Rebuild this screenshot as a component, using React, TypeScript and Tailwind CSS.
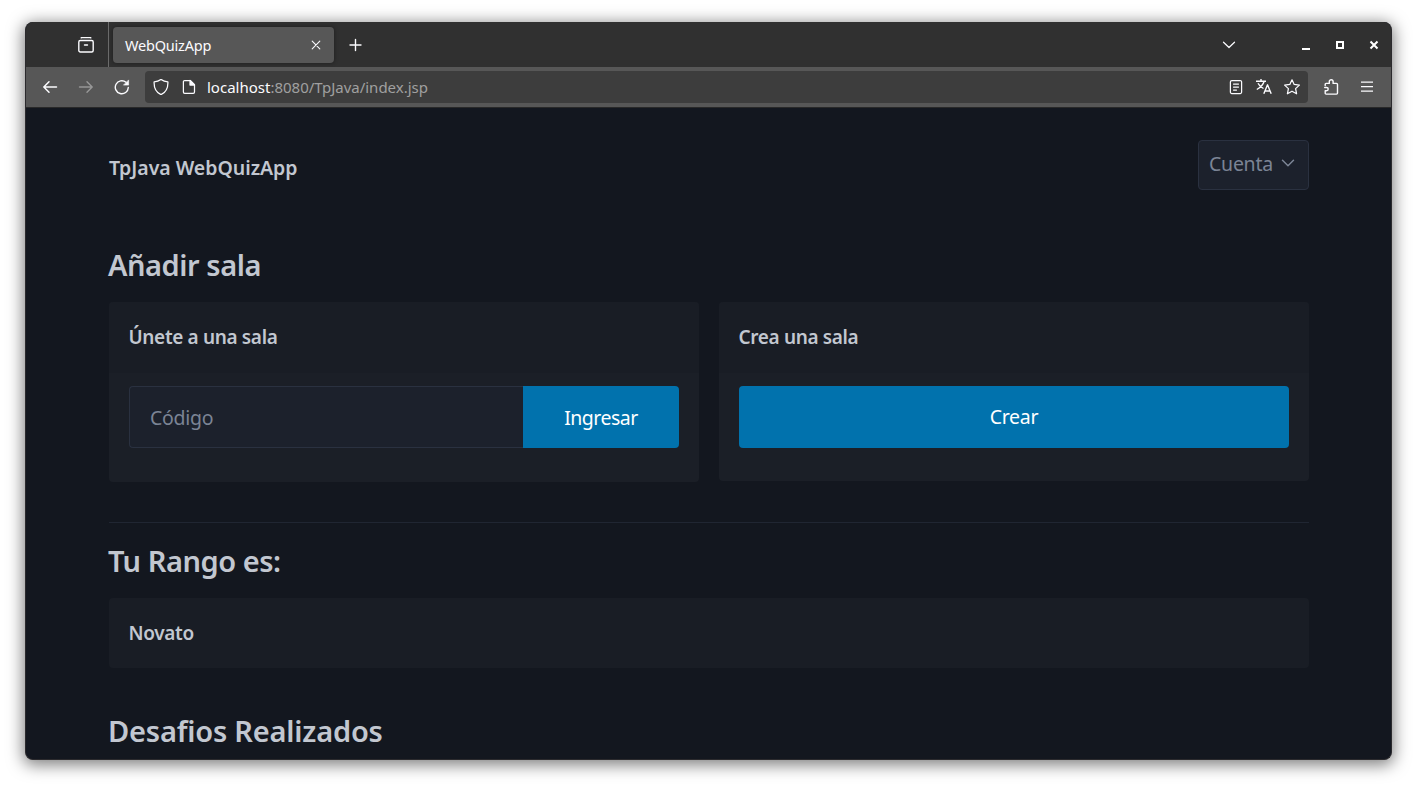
import React from "react";

type IconProps = { className?: string; children: React.ReactNode };

function Icon({ className = "", children }: IconProps) {
  return (
    <svg
      viewBox="0 0 16 16"
      className={`size-4 shrink-0 fill-none stroke-current ${className}`}
      strokeWidth="1.25"
      strokeLinecap="round"
      strokeLinejoin="round"
    >
      {children}
    </svg>
  );
}

function TabBar() {
  return (
    <div className="flex h-[45px] shrink-0 items-center bg-[#303030] text-[#fbfbfe]">
      <div className="flex h-full w-[83px] items-center border-r border-[#6b6b6b] pl-[52px]">
        <Icon className="mt-px">
          <path strokeWidth="1.4" d="M3.2.8q.5-.3 1-.3h7.600q.5 0 1 .3M2.300 3.500h11.400a1.500 1.500 0 0 1 1.500 1.500v8.500a1.500 1.500 0 0 1-1.500 1.500H2.300A1.500 1.500 0 0 1 .8 13.500V5A1.500 1.500 0 0 1 2.300 3.500zM6.500 8h3" />
        </Icon>
      </div>
      <div className="ml-1 flex h-9 w-[221px] items-center justify-between rounded-[4px] bg-[#575757] pr-[10px] pl-3 shadow-[0_0_4px_rgba(0,0,0,0.4)]">
        <span className="pt-0.5 text-[14.500px] tracking-[-0.2px]">WebQuizApp</span>
        <Icon>
          <path strokeWidth="1.1" d="M4.200 4.200l7.600 7.600M11.800 4.200l-7.600 7.600" />
        </Icon>
      </div>
      <Icon className="mt-px ml-[13px]">
        <path strokeWidth="1.400" d="M8.500 2.500v11M3 8h11" />
      </Icon>
      <Icon className="ml-auto">
        <path d="M2.500 5.200L8 10.500l5.500-5.300" />
      </Icon>
      <svg viewBox="0 0 80 12" className="ml-[65px] mr-[9px] h-3 w-20 fill-none stroke-white">
        <path d="M0 10h8" strokeWidth="2" />
        <path d="M35 3h6v6h-6z" strokeWidth="2" />
        <path d="M68.500 2.500l7 7M75.500 2.500l-7 7" strokeWidth="2" />
      </svg>
    </div>
  );
}

function AddressBar() {
  return (
    <div className="flex h-[41px] shrink-0 items-center border-b border-[#292929] bg-[#575757] text-[#fbfbfe]">
      <Icon className="ml-4">
        <path strokeWidth="1.500" d="M14.500 8H2M7 2.800L1.800 8 7 13.200" />
      </Icon>
      <Icon className="ml-5 text-[#979797]">
        <path strokeWidth="1.400" d="M1.500 8H14M9 2.800L14.200 8 9 13.200" />
      </Icon>
      <Icon className="ml-5">
        <path strokeWidth="1.400" d="M14.300 8.500A6.500 6.500 0 1 1 12 3.300" />
        <path d="M14.600 1.300v4.800H9.800z" fill="currentColor" strokeWidth="0.600" />
      </Icon>
      <div className="ml-[15px] flex h-8 w-[1163px] items-center rounded-[4px] bg-[#3d3d3d] pl-2 pr-2">
        <Icon>
          <path d="M8 .4c2 1.500 4.200 2.300 6.900 2.500.2 5.700-1.600 10.400-6.900 12.700C2.700 13.300.9 8.600 1.100 2.900 3.800 2.700 6 1.900 8 .4z" />
        </Icon>
        <Icon className="ml-3">
          <path d="M3.700 1.500h5.500l4.300 4.300v7.300a1.300 1.300 0 0 1-1.300 1.300H3.700a1.300 1.300 0 0 1-1.300-1.300V2.800a1.300 1.300 0 0 1 1.300-1.300z" />
          <path d="M9 1.500v4.500h4.500z" fill="currentColor" />
        </Icon>
        <span className="ml-[10px] text-[15px] text-[#a0a0a0]">
          <span className="text-[#fbfbfe]">localhost</span>:8080/TpJava/index.jsp
        </span>
        <Icon className="ml-auto">
          <path d="M3.800 1.500h8.400a1.400 1.400 0 0 1 1.400 1.400v10.200a1.400 1.400 0 0 1-1.400 1.400H3.800a1.400 1.400 0 0 1-1.400-1.400V2.900a1.400 1.400 0 0 1 1.400-1.400zM5.500 5h5M5.500 8h5M5.500 11h3" />
        </Icon>
        <Icon className="ml-3">
          <path strokeLinecap="butt" strokeWidth="1.400" d="M0 2.200h10M5 0v2.200M8.200 2.200C7 6 4.500 8.500.8 10.500M2 4.200c1.200 2.400 3 4 5.500 5.300M7.800 14.800l3.700-9 3.700 9M9 12h5" />
        </Icon>
        <Icon className="ml-3">
          <path d="M8 .8l2.200 4.600 5.200.7-3.800 3.500 1 5.200L8 12.200l-4.600 2.600 1-5.200L.6 6.100l5.200-.7z" />
        </Icon>
      </div>
      <Icon className="ml-[15px]">
        <path strokeWidth="1.400" d="M2.200 6.500V5.300a.9.900 0 0 1 .9-.9h3.200V2.600a1.900 1.900 0 0 1 3.800 0v1.800h3.400a1 1 0 0 1 1 1v8.700a1 1 0 0 1-1 1H3.100a.9.900 0 0 1-.9-.9v-2.500h1.400a1.600 1.600 0 0 0 0-3.200H1.700" />
      </Icon>
      <Icon className="ml-5">
        <path strokeLinecap="butt" d="M2 3h12M2 7.500h12M2 12h12" />
      </Icon>
    </div>
  );
}

function SectionTitle({ children, className = "tracking-[-0.450px]" }: { children: React.ReactNode; className?: string }) {
  return <h2 className={`-ml-px pb-0.5 text-[29px] leading-[38px] font-semibold whitespace-nowrap ${className}`}>{children}</h2>;
}

function CardHeader({ children, className = "h-[71px]" }: { children: React.ReactNode; className?: string }) {
  return (
    <header className={`flex items-center bg-[#191d25] px-[19.500px] text-[19px] font-semibold tracking-[-0.350px] ${className}`}>
      {children}
    </header>
  );
}

function QuizPage() {
  return (
    <main className="ml-[83px] w-[1200px] text-[#c2c7d0]">
      <nav className="flex items-start justify-between pt-8">
        <strong className="mt-[14px] text-[19.500px] leading-7 font-semibold tracking-[-0.030px]">TpJava WebQuizApp</strong>
        <button className="flex h-[50px] w-[111px] items-start rounded-[4px] border border-[#2a3140] bg-[#1c212c] pt-[9px] pl-[10px] text-[19.500px] leading-7 tracking-[-0.250px] text-[#7b8495]">
          Cuenta
          <Icon className="mt-[5px] ml-[7px]">
            <path strokeWidth="1.500" d="M2.500 5.300L8 10.700l5.500-5.400" />
          </Icon>
        </button>
      </nav>

      <section className="mt-14">
        <SectionTitle>Añadir sala</SectionTitle>
        <div className="mt-4 grid grid-cols-2 items-start gap-5">
          <article className="h-[180px] overflow-hidden rounded-[4px] bg-[#1b1f27]">
            <CardHeader>Únete a una sala</CardHeader>
            <form className="mx-5 mt-[13px] flex h-[62px]">
              <input
                placeholder="Código"
                className="min-w-0 flex-1 rounded-l-[4px] border border-r-0 border-[#2a3140] bg-[#1c212c] px-5 pt-0.5 text-[19.500px] tracking-[-0.300px] placeholder:text-[#7b8495]"
              />
              <button type="button" className="w-[156px] rounded-r-[4px] bg-[#0172ad] pt-0.5 text-[19.500px] tracking-[-0.500px] text-white">
                Ingresar
              </button>
            </form>
          </article>
          <article className="h-[179px] overflow-hidden rounded-[4px] bg-[#1b1f27]">
            <CardHeader>Crea una sala</CardHeader>
            <div className="mx-5 mt-[13px] flex h-[62px]">
              <button className="flex-1 rounded-[4px] bg-[#0172ad] text-[19.500px] tracking-[-0.250px] text-white">Crear</button>
            </div>
          </article>
        </div>
      </section>

      <hr className="mt-10 border-[#202632]" />

      <section className="mt-[19px]">
        <SectionTitle>Tu Rango es:</SectionTitle>
        <article className="mt-4 overflow-hidden rounded-[4px]">
          <CardHeader className="h-[70px]">Novato</CardHeader>
        </article>
      </section>

      <section className="mt-11">
        <SectionTitle className="tracking-[-0.200px]">Desafios Realizados</SectionTitle>
      </section>
    </main>
  );
}

export default function App() {
  return (
    <div className="h-[788px] w-[1417px] overflow-hidden bg-white pt-[22px] pl-[25px] font-['Noto_Sans',sans-serif]">
      <div className="flex h-[738px] w-[1367px] flex-col overflow-hidden rounded-[8px] border border-t-0 border-[#2b2a2d] bg-[#13171f] shadow-[0_3px_16px_2px_rgba(0,0,0,0.5)]">
        <TabBar />
        <AddressBar />
        <QuizPage />
      </div>
    </div>
  );
}
